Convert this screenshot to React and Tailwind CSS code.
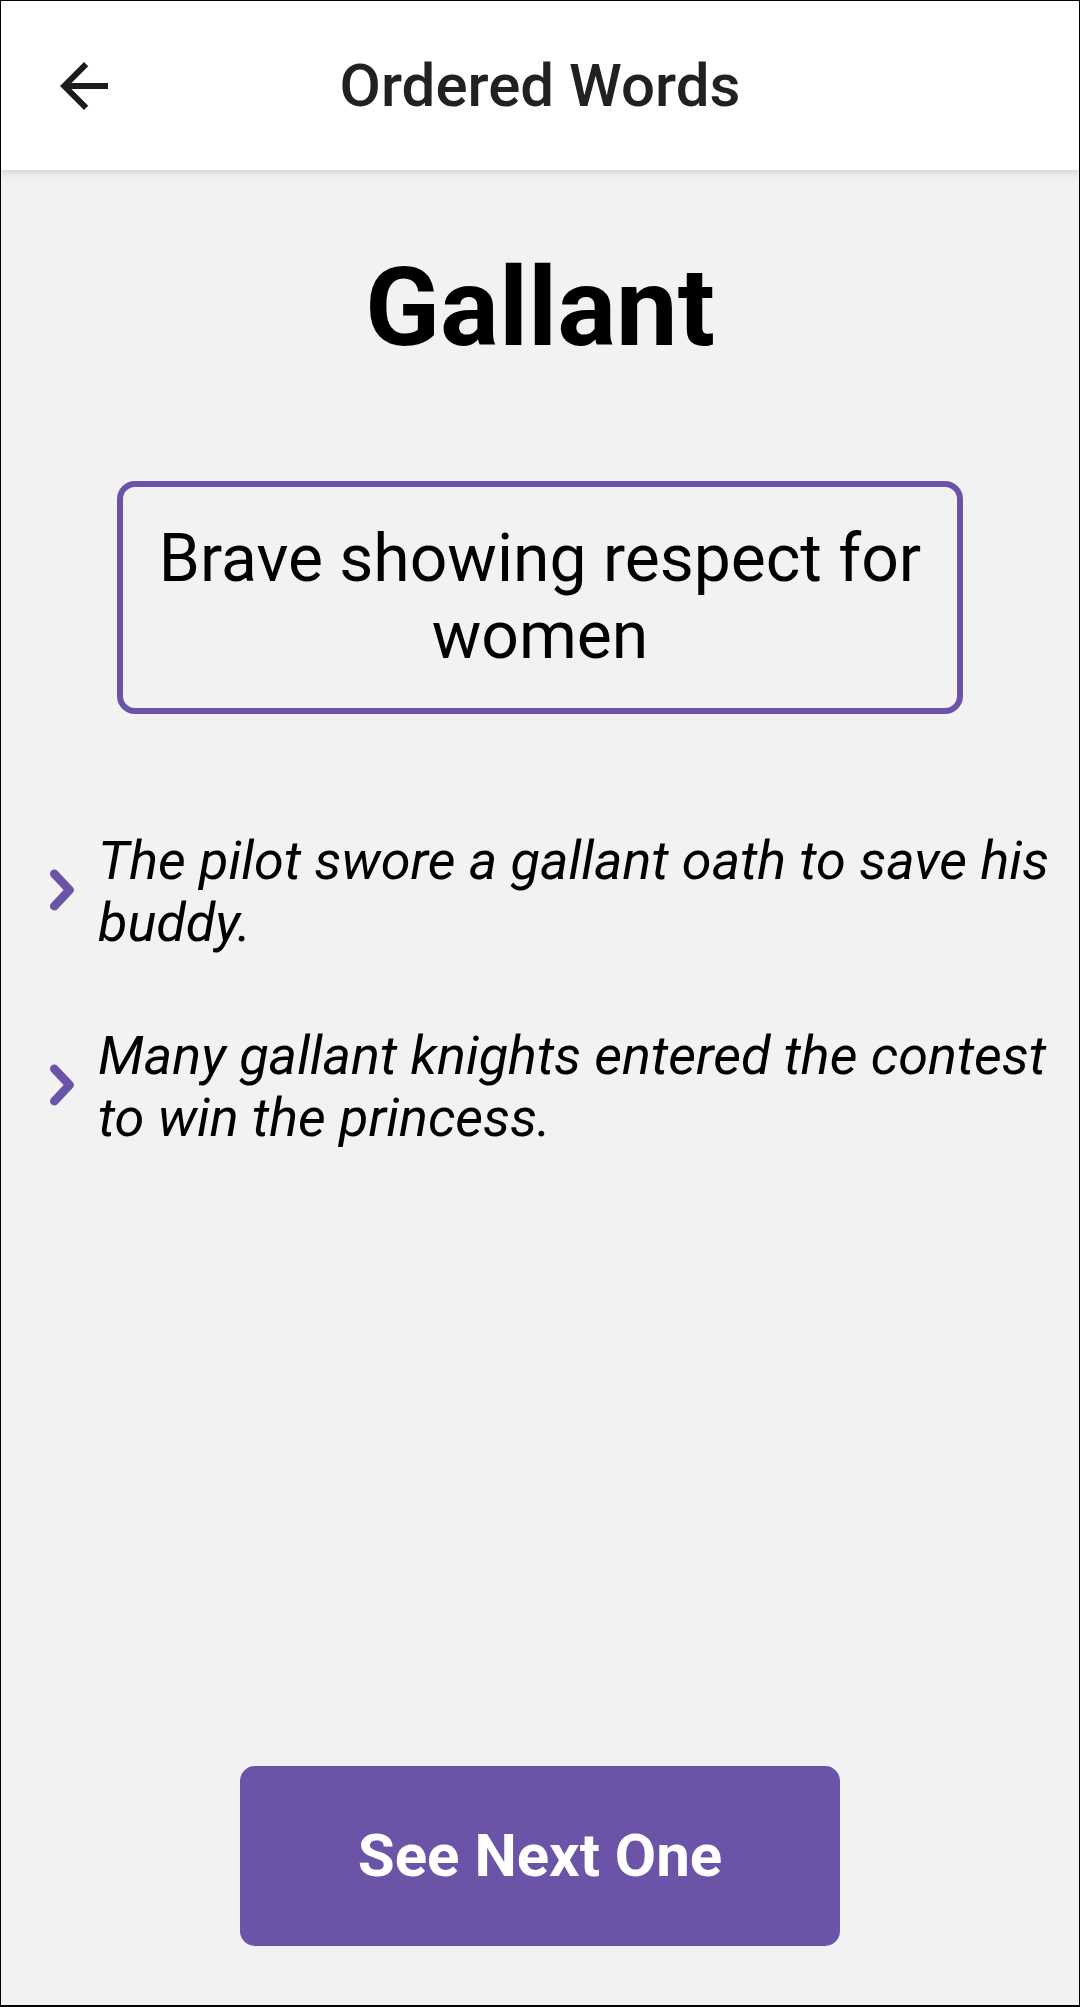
import React from 'react';

const sentences = [
  'The pilot swore a gallant oath to save his buddy.',
  'Many gallant knights entered the contest to win the princess.',
];

function BackArrow() {
  return (
    <svg width="72" height="72" viewBox="0 0 24 24" className="text-[#1c1c1c]">
      <path fill="currentColor" d="M20 11H7.83l5.59-5.59L12 4l-8 8 8 8 1.41-1.41L7.83 13H20v-2z" />
    </svg>
  );
}

function Chevron() {
  return (
    <svg width="25" height="42" viewBox="0 0 25 42" className="-mt-1 shrink-0 text-[#6b54a8]">
      <polyline
        points="5.25,4.75 20.5,21 5.25,37.25"
        fill="none"
        stroke="currentColor"
        strokeWidth="8.5"
        strokeLinecap="round"
        strokeLinejoin="round"
      />
    </svg>
  );
}

export default function App() {
  return (
    <div className="flex h-[2007px] w-full flex-col border border-b-2 border-black bg-[#f2f2f2] font-['Roboto',sans-serif]">
      {/* top bar */}
      <header className="relative z-10 grid h-[169px] grid-cols-[1fr_auto_1fr] items-center bg-white shadow-[0_2px_8px_rgba(0,0,0,0.16)]">
        <div className="pl-[47px]">
          <BackArrow />
        </div>
        <h1 className="text-[60px] font-medium leading-none text-[#212121]">Ordered Words</h1>
        <div />
      </header>

      <main className="flex flex-1 flex-col items-center">
        <h2 className="mt-[73px] text-[110px] font-bold leading-[129px] text-black">Gallant</h2>

        <div className="mt-[109px] w-[846px] rounded-[18px] border-[6px] border-[#6b54a8] px-7 pt-[33px] pb-[34px] text-center text-[66px] leading-[77px] text-black">
          Brave showing respect for women
        </div>

        {/* example sentences */}
        <ul className="mt-[116px] flex flex-col gap-[71px] self-stretch pl-[48px] pr-[20px]">
          {sentences.map((s) => (
            <li key={s} className="flex items-center gap-6">
              <Chevron />
              <p className="text-[54px] italic leading-[62px] text-black">{s}</p>
            </li>
          ))}
        </ul>

        <button className="mt-auto mb-[59px] flex h-[180px] w-[600px] items-center justify-center rounded-[15px] bg-[#6b54a8] text-[60px] font-bold text-white">
          See Next One
        </button>
      </main>
    </div>
  );
}
